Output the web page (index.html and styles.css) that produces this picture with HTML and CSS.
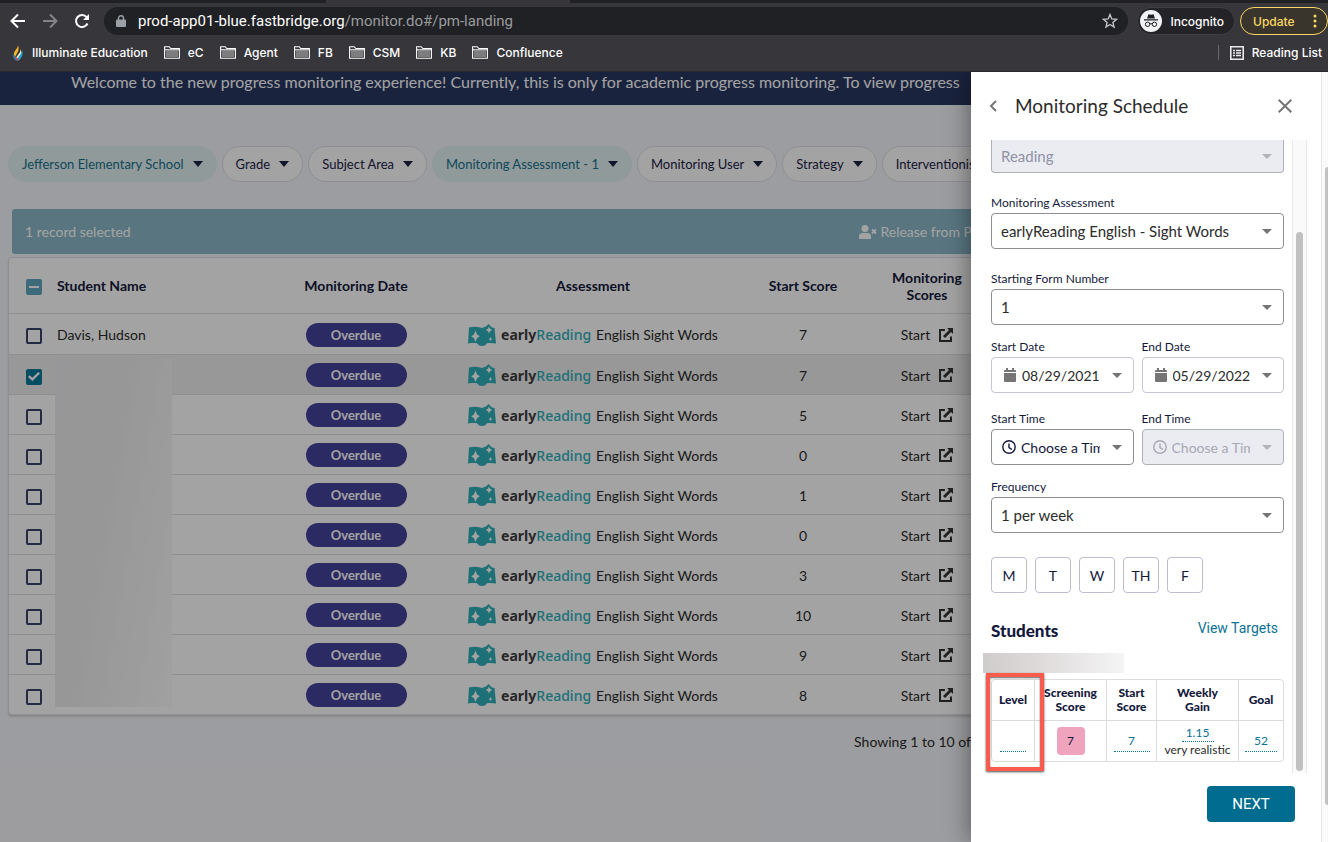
FILE: index.html
```html
<!DOCTYPE html>
<html lang="en">

<head>
    <meta charset="UTF-8">
    <meta name="viewport" content="width=device-width, initial-scale=1.0">
    <title>Monitoring Schedule</title>
    <link rel="stylesheet" href="styles.css">
</head>

<body>
    <svg class="sprite" aria-hidden="true">
        <symbol id="folder" viewBox="0 0 16 13">
            <path d="M.6 12.3V.7h4.6l1.6 1.8h8.6v9.8z" fill="none" stroke="#fff" stroke-width="1.1" />
            <path d="M2 4.4h12V11H2z" fill="#7d7d80" />
            <path d="M1 3.8h14" stroke="#fff" />
        </symbol>
        <symbol id="book" viewBox="0 0 28 22">
            <path d="M1 3.500c4-1 8-1 12 .3h1.500V20c-5-1.200-10-1.200-14.500-.5z" fill="#30afba" />
            <path d="M14 5c1-1.700 2.500-2.300 4-2.500L20.500 0 24 3.500l2.500.5L28 19.500c-4-.8-9-.8-14 .5z" fill="#30afba" />
            <path d="M9 19h10l-2 2.500q-3 .8-6 0z" fill="#30afba" />
            <path d="M7.500 6.500 9 10.500l2.800 1.800L9 14.200l-1.500 3.800L6 14.200l-2.800-1.900L6 10.500z" fill="#fff" />
            <path d="m21 2.500 1 2.300 2.200 1.200L22 7.200l-1 2.300-1-2.300L17.800 6 20 4.800zM22.500 13l.7 1.400 1.200.7-1.200.7-.7 1.400-.7-1.400-1.200-.7 1.200-.7z" fill="#fff" />
        </symbol>
        <symbol id="open" viewBox="0 0 14 14">
            <path d="M6 2H1v11h11V8.500" fill="none" stroke="#333" stroke-width="2" />
            <path d="M8 0h6v6l-2-2-6 6L4 8l6-6z" fill="#333" />
        </symbol>
        <symbol id="calendar" viewBox="0 0 12 14">
            <path d="M2 0h2v2h4V0h2v2h1a1 1 0 0 1 1 1v1H0V3a1 1 0 0 1 1-1h1zM0 5h12v8a1 1 0 0 1-1 1H1a1 1 0 0 1-1-1z" />
        </symbol>
        <symbol id="clock" viewBox="0 0 14 14">
            <path d="M7 .8a6.200 6.200 0 1 0 0 12.400A6.200 6.200 0 0 0 7 .8zM7 3.500V7.500l2.800 1.800" fill="none" stroke="currentColor" stroke-width="1.400" />
        </symbol>
    </svg>

    <header class="browser">
        <div class="tabs"><span></span></div>
        <div class="toolbar">
            <button class="tool" aria-label="Back"><svg width="16" height="16" viewBox="0 0 16 16" fill="none" stroke="#fff" stroke-width="2"><path d="M15 8H2M8 1.500 1.500 8 8 14.500" /></svg></button>
            <button class="tool" aria-label="Forward"><svg width="16" height="16" viewBox="0 0 16 16" fill="none" stroke="#848387" stroke-width="2"><path d="M1 8h13M8 1.500 14.500 8 8 14.500" /></svg></button>
            <button class="tool" aria-label="Reload"><svg width="16" height="16" viewBox="0 0 16 16"><path d="M13.500 10.500a6 6 0 1 1-.8-6.300" fill="none" stroke="#fff" stroke-width="2" /><path d="M15 1v6H9z" fill="#fff" /></svg></button>
            <div class="address">
                <svg width="10" height="12" viewBox="0 0 10 12"><rect y="4.500" width="10" height="7.500" rx="1" fill="#9aa0a6" /><path d="M2.500 5V3.200a2.500 2.500 0 0 1 5 0V5" fill="none" stroke="#9aa0a6" stroke-width="1.400" /></svg>
                <span class="url"><b>prod-app01-blue.fastbridge.org</b>/monitor.do#/pm-landing</span>
                <svg width="16" height="16" viewBox="0 0 16 16"><path d="m8 1.500 1.800 4.400 4.700.4-3.600 3.100 1.100 4.600L8 11.500 4 14l1.100-4.600-3.600-3.100 4.700-.4z" fill="none" stroke="#c3c4c7" stroke-width="1.400" /></svg>
            </div>
            <div class="incognito">
                <svg width="22" height="22" viewBox="0 0 22 22"><circle cx="11" cy="11" r="11" fill="#f1f3f4" /><path d="M7 8.500 8.500 4.200l2.500.6 2.500-.6L15 8.500zM4 9.300h14v1.200H4z" fill="#202124" /><circle cx="7.600" cy="14.300" r="2.200" fill="none" stroke="#202124" /><circle cx="14.400" cy="14.300" r="2.200" fill="none" stroke="#202124" /><path d="M9.800 14q1.200-.8 2.400 0" fill="none" stroke="#202124" /></svg>
                <span>Incognito</span>
            </div>
            <button class="update">Update <svg width="4" height="14" viewBox="0 0 4 14" fill="#fdd663"><circle cx="2" cy="2" r="1.500" /><circle cx="2" cy="7" r="1.500" /><circle cx="2" cy="12" r="1.500" /></svg></button>
        </div>
        <nav class="bookmarks">
            <a href="#"><svg width="12" height="16" viewBox="0 0 12 16"><path d="M6 0c0 4-4 5-4 9 0 1 .5 2 1.500 3C4 8 8 7 6 0z" fill="#fbb829" /><path d="M8 4c2 4-4 6-4 10l2 1.500C10 13 11 8 8 4z" fill="#f5f0d0" /><path d="M10 5c2 5-1 9-4 10.500C5 11 10 10 10 5z" fill="#1da1c4" /><path d="M1 8c-1 4 1 7 4 8 0-3-3-4-4-8z" fill="#2b7bb0" /><path d="m3 12 3 4c1-2-1-4-3-4z" fill="#dc3545" /></svg>Illuminate Education</a>
            <a href="#"><svg width="16" height="13"><use href="#folder" /></svg>eC</a>
            <a href="#"><svg width="16" height="13"><use href="#folder" /></svg>Agent</a>
            <a href="#"><svg width="16" height="13"><use href="#folder" /></svg>FB</a>
            <a href="#"><svg width="16" height="13"><use href="#folder" /></svg>CSM</a>
            <a href="#"><svg width="16" height="13"><use href="#folder" /></svg>KB</a>
            <a href="#"><svg width="16" height="13"><use href="#folder" /></svg>Confluence</a>
            <a href="#" class="reading"><svg width="14" height="14" viewBox="0 0 14 14"><path d="M.8.8h12.400v12.400H.8z" fill="none" stroke="#e8eaed" stroke-width="1.600" /><path d="M3 4.500h2M6 4.500h5M3 7h2M6 7h5M3 9.500h2M6 9.500h5" stroke="#e8eaed" stroke-width="1.400" /></svg>Reading List</a>
        </nav>
    </header>

    <div class="screen">
        <main class="page">
            <p class="banner">Welcome to the new progress monitoring experience! Currently, this is only for academic progress monitoring. To view progress</p>
            <div class="filters">
                <button class="filter active">Jefferson Elementary School</button>
                <button class="filter">Grade</button>
                <button class="filter">Subject Area</button>
                <button class="filter active">Monitoring Assessment - 1</button>
                <button class="filter">Monitoring User</button>
                <button class="filter">Strategy</button>
                <button class="filter">Interventionist</button>
            </div>
            <div class="selection">
                <span>1 record selected</span>
                <button class="release"><svg width="18" height="14" viewBox="0 0 18 14" fill="#fff"><circle cx="6" cy="3.500" r="3.500" /><path d="M0 14v-2.500Q0 8 3.500 8h5Q12 8 12 11.500V14z" /><path d="m13 4.500 4 4m0-4-4 4" stroke="#fff" stroke-width="1.800" /></svg>Release from P</button>
            </div>
            <div class="records">
                <table>
                    <colgroup>
                        <col class="col-check">
                        <col class="col-name">
                        <col class="col-date">
                        <col class="col-assessment">
                        <col class="col-score">
                        <col class="col-monitoring">
                        <col>
                    </colgroup>
                    <thead>
                        <tr>
                            <th><input type="checkbox" class="some" aria-label="Select all"></th>
                            <th class="name">Student Name</th>
                            <th>Monitoring Date</th>
                            <th>Assessment</th>
                            <th>Start Score</th>
                            <th>Monitoring Scores</th>
                            <th></th>
                        </tr>
                    </thead>
                    <tbody id="rows"></tbody>
                </table>
                <div class="redacted"></div>
            </div>
            <p class="showing">Showing 1 to 10 of</p>
        </main>
        <div class="backdrop"></div>

        <aside class="panel">
            <div class="panelHeader">
                <button aria-label="Back"><svg width="8" height="12" viewBox="0 0 8 12"><path d="M7 1 2 6l5 5" fill="none" stroke="#757575" stroke-width="2" /></svg></button>
                <h2>Monitoring Schedule</h2>
                <button aria-label="Close"><svg width="14" height="14" viewBox="0 0 14 14"><path d="m.7.7 12.600 12.600M13.300.7.7 13.300" stroke="#757575" stroke-width="2" /></svg></button>
            </div>
            <div class="panelBody">
                <form class="schedule">
                    <div class="box first disabled">
                        <select aria-label="Subject" disabled>
                            <option>Reading</option>
                        </select>
                    </div>
                    <div class="field spaced">
                        <label for="assessment">Monitoring Assessment</label>
                        <div class="box">
                            <select id="assessment">
                                <option>earlyReading English - Sight Words</option>
                            </select>
                        </div>
                    </div>
                    <div class="field spaced">
                        <label for="formNumber">Starting Form Number</label>
                        <div class="box">
                            <select id="formNumber">
                                <option>1</option>
                            </select>
                        </div>
                    </div>
                    <div class="pair">
                        <div class="field">
                            <label for="startDate">Start Date</label>
                            <div class="box date">
                                <svg width="12" height="14"><use href="#calendar" /></svg>
                                <input type="text" id="startDate" value="08/29/2021">
                            </div>
                        </div>
                        <div class="field">
                            <label for="endDate">End Date</label>
                            <div class="box date">
                                <svg width="12" height="14"><use href="#calendar" /></svg>
                                <input type="text" id="endDate" value="05/29/2022">
                            </div>
                        </div>
                    </div>
                    <div class="pair times">
                        <div class="field">
                            <label for="startTime">Start Time</label>
                            <div class="box time">
                                <svg width="14" height="14"><use href="#clock" /></svg>
                                <select id="startTime">
                                    <option>Choose a Time</option>
                                </select>
                            </div>
                        </div>
                        <div class="field">
                            <label for="endTime">End Time</label>
                            <div class="box time disabled">
                                <svg width="14" height="14"><use href="#clock" /></svg>
                                <select id="endTime" disabled>
                                    <option>Choose a Time</option>
                                </select>
                            </div>
                        </div>
                    </div>
                    <div class="field">
                        <label for="frequency">Frequency</label>
                        <div class="box">
                            <select id="frequency">
                                <option>1 per week</option>
                            </select>
                        </div>
                    </div>
                    <div class="days">
                        <button type="button">M</button>
                        <button type="button">T</button>
                        <button type="button">W</button>
                        <button type="button">TH</button>
                        <button type="button">F</button>
                    </div>
                    <div class="studentsHeader">
                        <h3>Students</h3>
                        <a href="#">View Targets</a>
                    </div>
                    <div class="studentName"></div>
                    <div class="goals">
                        <table>
                            <colgroup>
                                <col class="goal-level">
                                <col class="goal-screening">
                                <col class="goal-start">
                                <col class="goal-gain">
                                <col>
                            </colgroup>
                            <thead>
                                <tr>
                                    <th>Level</th>
                                    <th>Screening<br>Score</th>
                                    <th>Start<br>Score</th>
                                    <th>Weekly<br>Gain</th>
                                    <th>Goal</th>
                                </tr>
                            </thead>
                            <tbody>
                                <tr>
                                    <td><a href="#" class="edit" aria-label="Level"></a></td>
                                    <td><span class="risk">7</span></td>
                                    <td><a href="#" class="edit wide">7</a></td>
                                    <td><a href="#" class="edit gain">1.15</a>very realistic</td>
                                    <td><a href="#" class="edit goal">52</a></td>
                                </tr>
                            </tbody>
                        </table>
                        <div class="highlight"></div>
                    </div>
                </form>
                <div class="track"><span></span></div>
            </div>
            <div class="panelFooter">
                <button class="next">NEXT</button>
            </div>
        </aside>
        <div class="pageTrack"><span></span></div>
    </div>

    <script>
        const rows = document.getElementById("rows");
        const scores = [7, 7, 5, 0, 1, 0, 3, 10, 9, 8];
        scores.forEach((score, i) => {
            const selected = i === 1;
            rows.innerHTML += `
                <tr class="${selected ? "selected" : ""}">
                    <td><input type="checkbox" aria-label="Select student" ${selected ? "checked" : ""}></td>
                    <td class="name">${i === 0 ? "Davis, Hudson" : ""}</td>
                    <td><span class="overdue">Overdue</span></td>
                    <td>
                        <div class="assessment">
                            <svg width="28" height="22"><use href="#book" /></svg>
                            <span class="brand"><b>early</b>Reading</span>
                            <span>English Sight Words</span>
                        </div>
                    </td>
                    <td>${score}</td>
                    <td><a href="#" class="start">Start <svg width="14" height="14"><use href="#open" /></svg></a></td>
                    <td></td>
                </tr>`;
        });
    </script>
</body>

</html>
```
FILE: styles.css
```css
* {
    box-sizing: border-box;
}

body {
    margin: 0;
    height: 100vh;
    display: flex;
    flex-direction: column;
    overflow: hidden;
    font-family: Lato, "Liberation Sans", sans-serif;
    font-size: 14px;
    color: #2b2b2b;
}

button,
input,
select {
    font: inherit;
    color: inherit;
    margin: 0;
}

button {
    background: none;
    border: 0;
    padding: 0;
    cursor: pointer;
}

a {
    color: inherit;
    text-decoration: none;
}

h2,
h3,
p {
    margin: 0;
}

table {
    width: 100%;
    table-layout: fixed;
    border-collapse: separate;
    border-spacing: 0;
}

.sprite {
    display: none;
}

/* browser */
.browser {
    background: #37363a;
    border-bottom: 1px solid #29292c;
    font-family: Inter, "Liberation Sans", sans-serif;
    font-size: 12px;
    font-weight: 500;
    color: #fff;
}

.tabs {
    height: 3px;
    background: #202124;
    padding-left: 326px;
}

.tabs span {
    display: block;
    width: 244px;
    height: 3px;
    background: #37363a;
}

.toolbar {
    display: flex;
    align-items: center;
    height: 36px;
    padding: 0 0 0 10px;
}

.tool {
    display: flex;
    width: 16px;
    margin-right: 16px;
}

.address {
    flex: 1;
    display: flex;
    align-items: center;
    gap: 12px;
    height: 28px;
    margin: 0 9px 0 -2px;
    padding: 0 10px 0 12px;
    border-radius: 14px;
    background: #202124;
}

.url {
    flex: 1;
    font-family: Roboto, "Liberation Sans", sans-serif;
    font-size: 15px;
    font-weight: 400;
    color: #9a9b9e;
}

.url b {
    font-weight: 400;
    color: #fff;
}

.incognito {
    display: flex;
    align-items: center;
    gap: 8px;
    height: 28px;
    margin-right: 5px;
    padding: 0 10px 0 2px;
    border: 1px solid #3f3e43;
    border-radius: 14px;
    background: #242428;
}

.update {
    display: flex;
    align-items: center;
    justify-content: space-between;
    width: 88px;
    height: 28px;
    padding: 0 10px 0 12px;
    border: 1px solid #fdd663;
    border-radius: 14px;
    background: #39352d;
    color: #fdd663;
}

.bookmarks {
    display: flex;
    align-items: center;
    gap: 16px;
    height: 32px;
    padding: 0 6px 5px 12px;
}

.bookmarks a {
    display: flex;
    align-items: center;
    gap: 8px;
}

.bookmarks .reading {
    margin-left: auto;
    padding-left: 11px;
    border-left: 1px solid #68676b;
}

/* page behind the panel */
.screen {
    flex: 1;
    position: relative;
    display: flex;
    min-height: 0;
    overflow: hidden;
}

.page {
    flex: 1;
    min-width: 0;
    background: #f5f6fa;
}

.banner {
    height: 33px;
    padding-left: 71px;
    background: #293762;
    color: #fff;
    font-size: 16px;
    line-height: 20px;
    white-space: nowrap;
    overflow: hidden;
}

.filters {
    display: flex;
    gap: 5px;
    padding: 41px 8px 27px;
    overflow: hidden;
}

.filter {
    display: flex;
    flex-shrink: 0;
    align-items: center;
    gap: 9px;
    height: 36px;
    padding: 0 13px;
    border: 1px solid #dfe0e6;
    border-radius: 18px;
    background: #fff;
    color: #1c2345;
    font-size: 13px;
}

.filter::after {
    content: '';
    border: 5px solid transparent;
    border-top: 6px solid #1c2345;
    border-bottom: 0;
}

.filter.active {
    border-color: #e2f1f2;
    background: #e2f1f2;
    color: #17718c;
}

.selection {
    display: flex;
    align-items: center;
    justify-content: space-between;
    height: 45px;
    margin: 0 8px 3px 12px;
    padding: 0 341px 0 13px;
    border-radius: 3px;
    background: #8bb9c8;
    color: #fff;
}

.release {
    display: flex;
    align-items: center;
    gap: 3px;
}

.records {
    position: relative;
    margin: 0 8px;
    border: 1px solid #dfe0e6;
    border-radius: 4px;
    background: #fff;
    box-shadow: 0 2px 2px #d5d5d8;
}

.col-check {
    width: 48px;
}

.col-name {
    width: 193px;
}

.col-date {
    width: 212px;
}

.col-assessment {
    width: 262px;
}

.col-score {
    width: 158px;
}

.col-monitoring {
    width: 90px;
}

.records th,
.records td {
    padding: 0;
    text-align: center;
}

.records th {
    height: 55px;
    color: #14193c;
    line-height: 17px;
}

.records td {
    height: 40px;
    padding-top: 1px;
    border-top: 1px solid #dfe0e6;
}

.records tbody tr:first-child td {
    height: 41px;
}

.records .name {
    text-align: left;
}

.selected {
    background: #eee;
}

.records input {
    appearance: none;
    display: block;
    width: 16px;
    height: 16px;
    margin: 3px 0 0 17px;
    border: 2px solid #36426b;
    border-radius: 2px;
    background: #fff;
}

.records input.some,
.records input:checked {
    display: grid;
    place-items: center;
    border: 0;
    background: #067a9c;
}

.records input.some {
    background: #62a8c0;
}

.records input.some::after {
    content: '';
    width: 10px;
    height: 2px;
    background: #fff;
}

.records input:checked::after {
    content: '';
    width: 12px;
    height: 10px;
    background: #fff;
    clip-path: polygon(0 55%, 14% 38%, 36% 62%, 86% 4%, 100% 20%, 37% 96%);
}

.overdue {
    display: block;
    width: 101px;
    height: 24px;
    margin: 0 auto;
    border-radius: 12px;
    background: #46429b;
    color: #fff;
    font-size: 13px;
    font-weight: 700;
    line-height: 24px;
}

.assessment {
    display: flex;
    align-items: center;
    justify-content: center;
    gap: 5px;
    white-space: nowrap;
}

.brand {
    font-family: "Noto Sans", sans-serif;
    font-weight: 500;
    color: #30afba;
}

.brand b {
    color: #3c3c3c;
}

.start {
    display: flex;
    align-items: center;
    justify-content: center;
    gap: 9px;
}

.redacted {
    position: absolute;
    left: 46px;
    top: 101px;
    width: 117px;
    bottom: 7px;
    background: linear-gradient(100deg, #ededef, #ececec 40%, #fbfbfb);
}

.showing {
    padding: 18px 350px 0 0;
    text-align: right;
}

.backdrop {
    position: absolute;
    inset: 0;
    background: rgba(0, 0, 0, .36);
}

/* panel */
.panel {
    position: relative;
    width: 350px;
    margin-left: -350px;
    display: flex;
    flex-direction: column;
    background: #fff;
    box-shadow: -2px 0 22px rgba(0, 0, 0, .4);
}

.panelHeader {
    display: flex;
    align-items: center;
    height: 68px;
    padding: 0 29px 0 18px;
}

.panelHeader button {
    display: flex;
}

.panelHeader h2 {
    flex: 1;
    padding-left: 18px;
    font-size: 19px;
    font-weight: 400;
    line-height: 20px;
}

.panelBody {
    display: flex;
    justify-content: space-between;
    height: 633px;
    padding: 0 14px 0 20px;
}

.schedule {
    width: 293px;
}

.box {
    position: relative;
    display: flex;
    align-items: center;
    height: 36px;
    border: 1px solid #8f8f94;
    border-radius: 4px;
}

.box::after {
    content: '';
    position: absolute;
    right: 11px;
    border: 5px solid transparent;
    border-top-color: #757575;
    border-bottom: 0;
    pointer-events: none;
}

.box select,
.box input {
    appearance: none;
    width: 100%;
    height: 100%;
    padding: 0 33px 0 9px;
    border: 0;
    background: none;
    font-size: 15px;
    opacity: 1;
}

.box.first {
    height: 33px;
    border-top: 0;
    border-radius: 0 0 4px 4px;
}

.box.disabled {
    border-color: #aeb0b8;
    background: #ebecf1;
    color: #8f92a5;
}

.box.disabled::after {
    border-top-color: #b3b4ba;
}

.box.date {
    border-color: #c5c6d2;
    padding-left: 12px;
}

.box.date svg {
    flex-shrink: 0;
    fill: #757575;
}

.box.date input {
    padding: 0 0 0 6px;
    font-size: 14px;
}

.box.time {
    padding-left: 10px;
    color: #14193c;
}

.box.time.disabled {
    color: #a6a8b4;
}

.box.time svg {
    flex-shrink: 0;
}

.box.time select {
    padding: 0 33px 0 5px;
    font-size: 14px;
}

.field label {
    display: block;
    height: 18px;
    font-size: 12px;
    line-height: 16px;
    color: #14193c;
}

.spaced {
    margin-top: 22px;
}

.pair {
    display: grid;
    grid-template-columns: 1fr 1fr;
    gap: 8px;
    margin-top: 14px;
}

.pair.times {
    margin: 18px 0 14px;
}

.days {
    display: flex;
    gap: 8px;
    margin-top: 24px;
}

.days button {
    width: 36px;
    height: 36px;
    border: 1px solid #bdbdd0;
    border-radius: 4px;
    color: #14193c;
}

.studentsHeader {
    display: flex;
    justify-content: space-between;
    height: 60px;
    padding: 25px 6px 0 0;
}

.studentsHeader h3 {
    font-size: 17px;
    font-weight: 900;
    line-height: 26px;
    color: #14193c;
}

.studentsHeader a {
    font-family: Roboto, sans-serif;
    line-height: 20px;
    color: #0b7394;
}

.studentName {
    width: 141px;
    height: 20px;
    margin: 0 0 6px -8px;
    background: linear-gradient(90deg, #cfcccc, #dedada 40%, #f5f5f6);
}

.goals {
    position: relative;
    border: 1px solid #dcdcdc;
    border-radius: 4px;
}

.goal-level {
    width: 42px;
}

.goal-screening {
    width: 72px;
}

.goal-start {
    width: 50px;
}

.goal-gain {
    width: 82px;
}

.goals th,
.goals td {
    height: 40px;
    padding: 0;
    border-left: 1px solid #dcdcdc;
    text-align: center;
    font-size: 12px;
    line-height: 14px;
    white-space: nowrap;
}

.goals th:first-child,
.goals td:first-child {
    border-left: 0;
}

.goals th {
    height: 41px;
    border-bottom: 1px solid #dcdcdc;
    color: #14193c;
    font-weight: 900;
}

.goals td {
    line-height: 16px;
}

.goals .edit {
    display: block;
    width: 26px;
    height: 19px;
    margin: 3px auto 0;
    border-bottom: 1px dotted #0b7394;
    color: #0b7394;
}

.goals .wide {
    width: 36px;
}

.goals .goal {
    width: 32px;
}

.goals .gain {
    width: 32px;
    height: 17px;
    margin: 0 auto;
}

.risk {
    display: block;
    width: 28px;
    height: 28px;
    margin: 0 auto;
    border-radius: 4px;
    background: #efa3bd;
    line-height: 28px;
    color: #14193c;
}

.highlight {
    position: absolute;
    left: -6px;
    top: -7px;
    width: 58px;
    height: 98px;
    border: 4px solid #f95c4c;
    box-shadow: 0 1px 2px rgba(0, 0, 0, .7), inset 0 1px 2px rgba(0, 0, 0, .6);
}

.track {
    width: 15px;
    padding: 92px 3px 2px;
    border: 1px solid #e8e8e8;
    border-width: 0 1px;
    background: #fafafa;
}

.track span {
    display: block;
    height: 100%;
    border-radius: 4px;
    background: #c1c1c1;
}

.panelFooter {
    display: flex;
    justify-content: flex-end;
    padding: 13px 26px 0 0;
}

.next {
    width: 88px;
    height: 36px;
    border-radius: 4px;
    background: #006c8f;
    color: #fff;
    font-family: Roboto, sans-serif;
    font-size: 15px;
}

.pageTrack {
    position: relative;
    width: 7px;
    padding: 95px 0 37px 3px;
    border-left: 1px solid #e8e8e8;
    background: #fafafa;
}

.pageTrack span {
    display: block;
    height: 100%;
    border-radius: 4px 0 0 4px;
    background: #c1c1c1;
}
```
